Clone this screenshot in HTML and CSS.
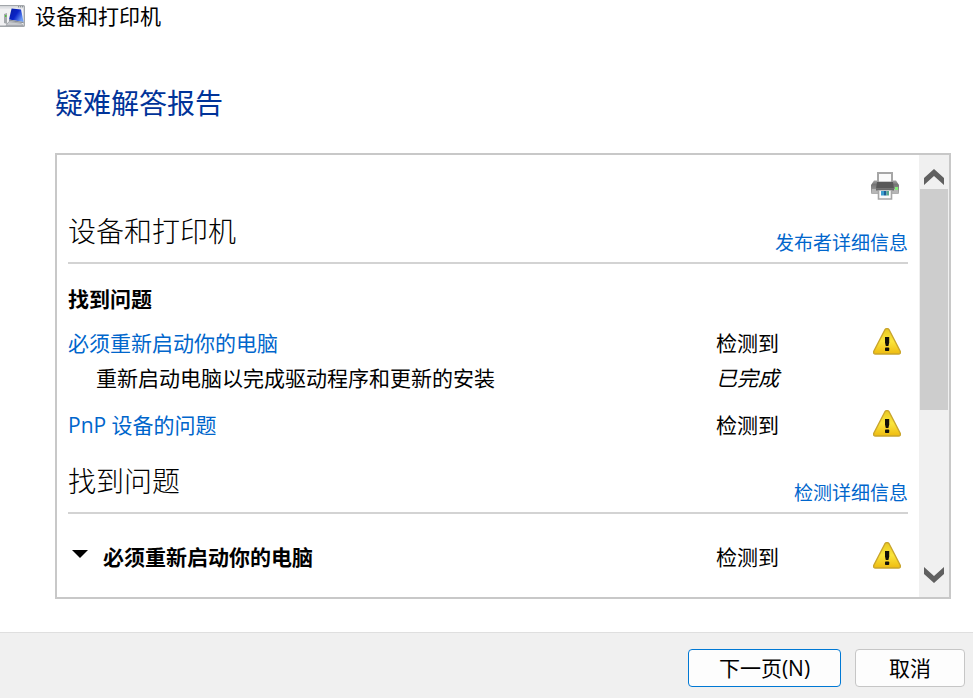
FILE: index.html
```html
<!DOCTYPE html>
<html lang="zh-CN">
<head>
  <meta charset="UTF-8" />
  <title>设备和打印机</title>
  <meta name="viewport" content="width=device-width, initial-scale=1.0" />
  <link rel="stylesheet" href="styles.css">
</head>
<body>
  <svg class="defs" width="0" height="0" aria-hidden="true">
    <defs>
      <linearGradient id="yellow" x1="0" y1="0" x2="0" y2="1">
        <stop offset="0" stop-color="#e8c820" />
        <stop offset="0.5" stop-color="#fbe53c" />
        <stop offset="1" stop-color="#eebb10" />
      </linearGradient>
      <symbol id="warning" viewBox="0 0 28 27">
        <path d="M11.9 1.8Q14 -0.9 16.1 1.8L27.2 23.2Q27.9 26 25.4 26H2.6Q0.1 26 0.8 23.2Z" fill="url(#yellow)" stroke="#c9a52c" stroke-width="1.4" />
        <path d="M12 9h4.2v5.5l-.8 3.5h-2.6l-.8-3.5z" fill="#12110a" />
        <rect x="12" y="19.4" width="4.2" height="3.6" rx="0.8" fill="#12110a" />
      </symbol>
    </defs>
  </svg>

  <header class="titlebar">
    <svg class="app-icon" width="25" height="22" viewBox="0 0 25 22" aria-hidden="true">
      <defs>
        <linearGradient id="screen" x1="0" y1="0" x2="1" y2="0.6">
          <stop offset="0" stop-color="#0a1f9c" />
          <stop offset="0.55" stop-color="#0a24c8" />
          <stop offset="1" stop-color="#6d9cf5" />
        </linearGradient>
      </defs>
      <path d="M0 .7H23.4Q24.3 .7 24.3 1.6V20.4Q24.3 21.3 23.4 21.3H0" fill="#f1f1f3" stroke="#a2a6aa" stroke-width="1.4" />
      <path d="M0 1.4H23.6V3.6H0z" fill="#dfe1e4" />
      <path d="M18 1.8h1.2M20 1.8h1.2M22 1.8h1.2" stroke="#70757a" />
      <path d="M4 9l3-1v11l-3-1z" fill="#a5a9ad" />
      <rect x="5" y="10" width="1.5" height="2" fill="#4fbf3c" />
      <path d="M11.6 3.4L21 4.4 23.6 17 9 14.6z" fill="url(#screen)" />
      <path d="M9 14.6L23.6 17v1.2L9 16z" fill="#8d9298" />
      <path d="M9 16.6l12 1.6 2 2.2H6z" fill="#c9ccd0" stroke="#92979c" stroke-width="0.7" />
    </svg>
    <span>设备和打印机</span>
  </header>

  <main>
    <h1>疑难解答报告</h1>

    <div class="panel">
      <div class="report">
        <button class="print" type="button" aria-label="打印">
          <svg width="28" height="29" viewBox="0 0 28 29" aria-hidden="true">
            <defs>
              <linearGradient id="printer" x1="0" y1="0" x2="0" y2="1">
                <stop offset="0" stop-color="#a4a4a4" />
                <stop offset="0.3" stop-color="#757575" />
                <stop offset="0.6" stop-color="#8d8d8d" />
                <stop offset="1" stop-color="#b4b4b4" />
              </linearGradient>
            </defs>
            <rect x="7" y="2" width="14" height="12" fill="#fafafa" stroke="#a6a6a6" stroke-width="2" />
            <path d="M3 9.5h3v1h16v-1h3l3 4.5v8q0 1-1 1H1q-1 0-1-1v-8z" fill="url(#printer)" />
            <path d="M6 11h16l1 6.5H5z" fill="#585858" />
            <path d="M1 18h26v4H1z" fill="#b6b6b6" />
            <path d="M5 18h18v1.5H5z" fill="#6a6a6a" />
            <rect x="24" y="16" width="3" height="3" fill="#84ee78" />
            <path d="M8 19.5h12v8.5H8z" fill="#fafafa" />
            <path d="M7.5 19v9h13v-9" fill="none" stroke="#a6a6a6" stroke-width="1.6" />
            <rect x="10" y="20" width="3" height="4.5" fill="#3d9fd0" />
            <rect x="13" y="20" width="2.5" height="4.5" fill="#1c5e98" />
            <rect x="15.5" y="20" width="2.5" height="4.5" fill="#58a98e" />
          </svg>
        </button>

        <div class="section-head">
          <h2>设备和打印机</h2>
          <a href="#publisher">发布者详细信息</a>
        </div>

        <h3>找到问题</h3>
        <table>
          <colgroup><col><col class="col-status"><col class="col-icon"></colgroup>
          <tr>
            <td><a href="#restart">必须重新启动你的电脑</a></td>
            <td>检测到</td>
            <td class="icon"><svg width="28" height="27" role="img" aria-label="警告"><use href="#warning" /></svg></td>
          </tr>
          <tr>
            <td class="indent">重新启动电脑以完成驱动程序和更新的安装</td>
            <td><em>已完成</em></td>
            <td></td>
          </tr>
          <tr class="spaced">
            <td><a href="#pnp">PnP 设备的问题</a></td>
            <td>检测到</td>
            <td class="icon"><svg width="28" height="27" role="img" aria-label="警告"><use href="#warning" /></svg></td>
          </tr>
        </table>

        <div class="section-head second">
          <h2>找到问题</h2>
          <a href="#detection">检测详细信息</a>
        </div>

        <table class="details" id="restart">
          <colgroup><col><col class="col-status"><col class="col-icon"></colgroup>
          <tr>
            <td>
              <button class="toggle" type="button" aria-expanded="true">
                <svg width="16" height="8" viewBox="0 0 16 8" aria-hidden="true"><path d="M0 0H16L8 8z" /></svg>
                必须重新启动你的电脑
              </button>
            </td>
            <td>检测到</td>
            <td class="icon"><svg width="28" height="27" role="img" aria-label="警告"><use href="#warning" /></svg></td>
          </tr>
        </table>
      </div>

      <div class="scrollbar">
        <button type="button" aria-label="向上滚动">
          <svg width="20" height="16" viewBox="0 0 20 16" aria-hidden="true"><path d="M10 0L20 9V16L10 7 0 16V9z" /></svg>
        </button>
        <div class="track"><div class="thumb"></div></div>
        <button type="button" aria-label="向下滚动">
          <svg width="20" height="16" viewBox="0 0 20 16" aria-hidden="true"><path d="M10 16L20 7V0L10 9 0 0V7z" /></svg>
        </button>
      </div>
    </div>
  </main>

  <footer>
    <button class="btn next" type="button">下一页(N)</button>
    <button class="btn" type="button">取消</button>
  </footer>
</body>
</html>
```
FILE: styles.css
```css
* {
  box-sizing: border-box;
}
body {
  font-family: "Open Sans", "Noto Sans CJK SC", sans-serif;
  font-size: 21px;
  background: #fff;
  color: #000;
  margin: 0;
  min-height: 100vh;
  display: flex;
  flex-direction: column;
}
h1, h2, h3 {
  margin: 0;
  font-weight: 400;
}
a {
  color: #0066cc;
  text-decoration: none;
}
a:hover {
  text-decoration: underline;
}
button {
  font: inherit;
  color: inherit;
  padding: 0;
  border: none;
  background: none;
}
svg {
  display: block;
}
.defs {
  position: absolute;
}
.titlebar {
  display: flex;
  align-items: center;
  gap: 10px;
  height: 32px;
  line-height: 32px;
}
main {
  flex: 1;
  display: flex;
  flex-direction: column;
  padding: 51px 22px 33px 55px;
}
h1 {
  font-size: 28px;
  line-height: 40px;
  color: #003399;
  margin-bottom: 30px;
}
.panel {
  flex: 1;
  display: flex;
  border: 2px solid #c8c8c8;
}
.report {
  flex: 1;
  padding: 16px 11px 20px;
}
.print {
  display: block;
  margin: 0 9px 9px auto;
}
.section-head {
  display: flex;
  justify-content: space-between;
  align-items: flex-end;
  padding-bottom: 7px;
  border-bottom: 2px solid #d3d3d3;
}
.section-head.second {
  margin-top: 16px;
}
.section-head a {
  font-size: 19px;
  line-height: 24px;
}
h2 {
  font-size: 28px;
  font-weight: 300;
  line-height: 44px;
  padding-bottom: 2px;
}
h3 {
  font-size: 21px;
  font-weight: 700;
  line-height: 28px;
  margin: 21px 0 13px;
}
table {
  width: 100%;
  table-layout: fixed;
  border-collapse: collapse;
}
.col-status {
  width: 157px;
}
.col-icon {
  width: 35px;
}
td {
  height: 35px;
  line-height: 35px;
  padding: 0;
  vertical-align: top;
}
td.indent {
  padding-left: 28px;
}
td.icon {
  padding-top: 2px;
}
.spaced td {
  height: 47px;
  padding-top: 12px;
}
.spaced td.icon {
  padding-top: 14px;
}
.details {
  margin-top: 26px;
}
.toggle {
  display: flex;
  align-items: center;
  gap: 15px;
  padding-left: 4px;
  font-weight: 700;
}
.toggle svg {
  margin-bottom: 8px;
}
.scrollbar {
  width: 30px;
  display: flex;
  flex-direction: column;
  background: #f0f0f0;
  padding: 0 1px;
}
.scrollbar button {
  height: 34px;
  display: flex;
  align-items: center;
  justify-content: center;
  padding-top: 9px;
}
.scrollbar button:last-child {
  padding: 0 0 10px;
}
.scrollbar path {
  fill: #606060;
}
.track {
  flex: 1;
}
.thumb {
  height: 59%;
  background: #cdcdcd;
}
footer {
  display: flex;
  justify-content: flex-end;
  gap: 14px;
  padding: 16px 8px 11px;
  background: #f0f0f0;
  border-top: 1px solid #dfdfdf;
}
.btn {
  width: 110px;
  height: 38px;
  padding-bottom: 2px;
  background: #fdfdfd;
  border: 1px solid #c6c6c6;
  border-radius: 4px;
}
.btn.next {
  width: 153px;
  border-color: #0078d4;
}
```
